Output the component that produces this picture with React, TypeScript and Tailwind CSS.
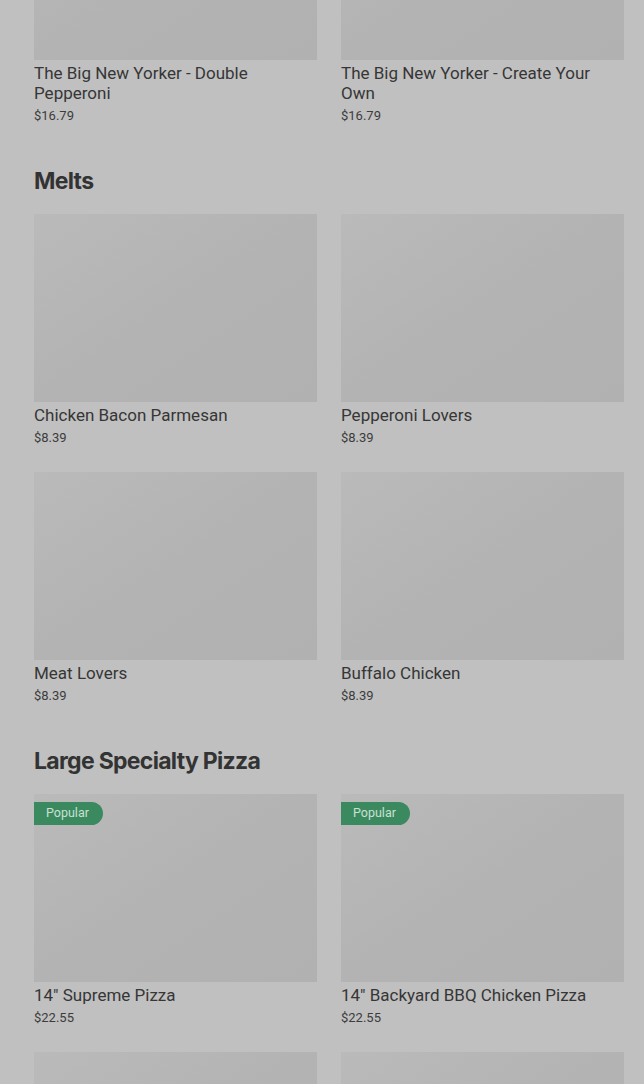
import React from "react";

type Item = { name: string; price: string; popular?: boolean };

const sections: { title?: string; items: Item[] }[] = [
  {
    items: [
      { name: "The Big New Yorker - Double Pepperoni", price: "$16.79" },
      { name: "The Big New Yorker - Create Your Own", price: "$16.79" },
    ],
  },
  {
    title: "Melts",
    items: [
      { name: "Chicken Bacon Parmesan", price: "$8.39" },
      { name: "Pepperoni Lovers", price: "$8.39" },
      { name: "Meat Lovers", price: "$8.39" },
      { name: "Buffalo Chicken", price: "$8.39" },
    ],
  },
  {
    title: "Large Specialty Pizza",
    items: [
      { name: '14" Supreme Pizza', price: "$22.55", popular: true },
      { name: '14" Backyard BBQ Chicken Pizza', price: "$22.55", popular: true },
      { name: "", price: "" },
      { name: "", price: "" },
    ],
  },
];

function ItemCard({ item }: { item: Item }) {
  return (
    <div className="flex flex-col">
      <div className="relative h-[188px] bg-gradient-to-br from-[#bababa] via-[#b3b3b3] to-[#b1b1b1]">
        {item.popular && (
          <span className="absolute left-0 top-[8px] flex h-[23px] items-center rounded-r-full bg-[#3b8a5f] pl-3 pr-[14px] text-[12.5px] text-[#c9e0d2]">
            Popular
          </span>
        )}
      </div>
      <div className="mt-[3px] text-[17px] leading-5 text-[#363636]">{item.name}</div>
      <div className="mt-1 text-[13px] leading-[18px] text-[#3c3c3c]">{item.price}</div>
    </div>
  );
}

export default function App() {
  return (
    <div
      className="h-[1084px] overflow-hidden bg-[#c0c0c0] pl-[34px] pr-[20px]"
      style={{ fontFamily: "Roboto, 'Liberation Sans', sans-serif" }}
    >
      <div className="-mt-[128px]">
        {sections.map((s, i) => (
          <section key={i} className={i > 0 ? "mt-10" : ""}>
            {s.title && (
              <h2
                className="mb-[17px] text-[23px] font-bold leading-8 tracking-[-0.7px] text-[#333333]"
                style={{ fontFamily: "Inter, 'Liberation Sans', sans-serif" }}
              >
                {s.title}
              </h2>
            )}
            <div className="grid grid-cols-2 gap-x-6 gap-y-[25px]">
              {s.items.map((it, j) => (
                <ItemCard key={j} item={it} />
              ))}
            </div>
          </section>
        ))}
      </div>
    </div>
  );
}
